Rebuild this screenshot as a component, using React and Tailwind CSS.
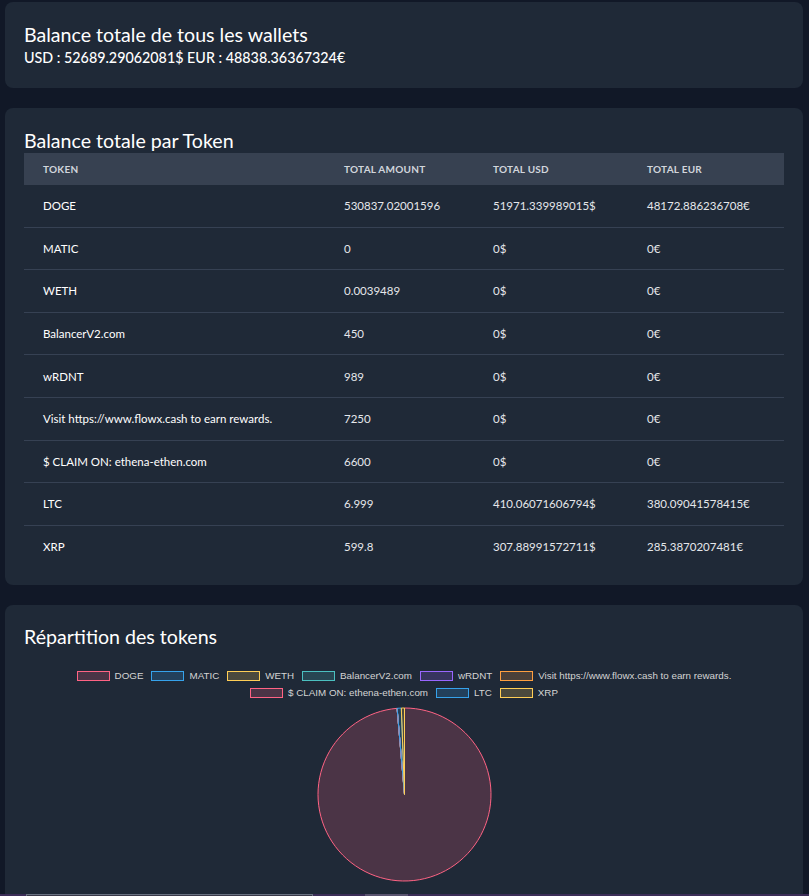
import React from 'react';

const tokens = [
  { name: 'DOGE', amount: '530837.02001596', usd: '51971.339989015$', eur: '48172.886236708€', value: 51971.339989015 },
  { name: 'MATIC', amount: '0', usd: '0$', eur: '0€', value: 0 },
  { name: 'WETH', amount: '0.0039489', usd: '0$', eur: '0€', value: 0 },
  { name: 'BalancerV2.com', amount: '450', usd: '0$', eur: '0€', value: 0 },
  { name: 'wRDNT', amount: '989', usd: '0$', eur: '0€', value: 0 },
  { name: 'Visit https://www.flowx.cash to earn rewards.', amount: '7250', usd: '0$', eur: '0€', value: 0 },
  { name: '$ CLAIM ON: ethena-ethen.com', amount: '6600', usd: '0$', eur: '0€', value: 0 },
  { name: 'LTC', amount: '6.999', usd: '410.06071606794$', eur: '380.09041578415€', value: 410.06071606794 },
  { name: 'XRP', amount: '599.8', usd: '307.88991572711$', eur: '285.3870207481€', value: 307.88991572711 },
];

// chart.js default palette
const palette = [
  { border: 'rgb(255,99,132)', fill: 'rgba(255,99,132,0.2)' },
  { border: 'rgb(54,162,235)', fill: 'rgba(54,162,235,0.2)' },
  { border: 'rgb(255,206,86)', fill: 'rgba(255,206,86,0.2)' },
  { border: 'rgb(75,192,192)', fill: 'rgba(75,192,192,0.2)' },
  { border: 'rgb(153,102,255)', fill: 'rgba(153,102,255,0.2)' },
  { border: 'rgb(255,159,64)', fill: 'rgba(255,159,64,0.2)' },
];

const colorOf = (i) => palette[i % palette.length];

const LegendItem = ({ label, index }) => {
  const c = colorOf(index);
  return (
    <div className="flex items-center">
      <span
        className="inline-block w-[33px] h-[10px] border mr-[5px]"
        style={{ borderColor: c.border, backgroundColor: c.fill }}
      />
      <span>{label}</span>
    </div>
  );
};

const PieChart = () => {
  const size = 175;
  const cx = size / 2;
  const cy = size / 2;
  const r = 86.5;
  const total = tokens.reduce((s, t) => s + t.value, 0);

  const point = (deg) => {
    const a = (deg * Math.PI) / 180;
    return [cx + r * Math.sin(a), cy - r * Math.cos(a)];
  };

  let start = 0;
  const slices = tokens.map((t, i) => {
    const sweep = (t.value / total) * 360;
    const end = start + sweep;
    const [x1, y1] = point(start);
    const [x2, y2] = point(end);
    const large = sweep > 180 ? 1 : 0;
    const d =
      sweep === 0
        ? `M ${cx} ${cy} L ${x1} ${y1}`
        : `M ${cx} ${cy} L ${x1} ${y1} A ${r} ${r} 0 ${large} 1 ${x2} ${y2} Z`;
    start = end;
    const c = colorOf(i);
    return <path key={t.name} d={d} fill={sweep === 0 ? 'none' : c.fill} stroke={c.border} strokeWidth="1" />;
  });

  return (
    <svg width={size} height={size} viewBox={`0 0 ${size} ${size}`}>
      {slices}
    </svg>
  );
};

const App = () => {
  return (
    <div className="min-h-screen bg-[#111827] px-[5px] pt-[2px] text-white font-['Lato',sans-serif] overflow-hidden">
      {/* Balance globale */}
      <div className="bg-[#1f2937] rounded-lg px-[19px] pt-[20px] pb-[20px] mr-[1px]">
        <h2 className="text-[19.6px] leading-[26px]">Balance totale de tous les wallets</h2>
        <p className="text-[14.3px] leading-[20px] font-medium">USD : 52689.29062081$ EUR : 48838.36367324€</p>
      </div>

      {/* Table par token */}
      <div className="bg-[#1f2937] rounded-lg px-[19px] pt-[20px] pb-[17px] mt-[20px] mr-[1px]">
        <h2 className="text-[19.6px] leading-[26px]">Balance totale par Token</h2>
        <div className="mt-[-1px] text-[11.5px]">
          <div className="grid grid-cols-[301px_149px_154px_1fr] h-[32px] items-center bg-[#374151] text-[10px] font-bold tracking-wide uppercase text-gray-300">
            <div className="pl-[19px]">Token</div>
            <div className="pl-[19px]">Total Amount</div>
            <div className="pl-[19px]">Total USD</div>
            <div className="pl-[19px]">Total EUR</div>
          </div>
          {tokens.map((t, i) => (
            <div
              key={t.name}
              className={`grid grid-cols-[301px_149px_154px_1fr] h-[42.6px] items-center ${i < tokens.length - 1 ? 'border-b border-gray-700' : ''}`}
            >
              <div className="pl-[19px] text-white">{t.name}</div>
              <div className="pl-[19px] text-gray-200">{t.amount}</div>
              <div className="pl-[19px] text-gray-200">{t.usd}</div>
              <div className="pl-[19px] text-gray-200">{t.eur}</div>
            </div>
          ))}
        </div>
      </div>

      {/* Répartition */}
      <div className="bg-[#1f2937] rounded-t-lg px-[19px] pt-[19px] mt-[20px] mr-[1px] h-[289px]">
        <h2 className="text-[19.6px] leading-[26px]">Répartition des tokens</h2>
        <div className="mt-[21px] flex flex-col items-center gap-[7px] text-[9.8px] leading-[10px] text-[#d4d4d4] font-['Liberation_Sans',sans-serif]">
          <div className="flex gap-[8px]">
            {tokens.slice(0, 6).map((t, i) => (
              <LegendItem key={t.name} label={t.name} index={i} />
            ))}
          </div>
          <div className="flex gap-[8px]">
            {tokens.slice(6).map((t, i) => (
              <LegendItem key={t.name} label={t.name} index={i + 6} />
            ))}
          </div>
        </div>
        <div className="flex justify-center mt-[9px]">
          <PieChart />
        </div>
      </div>

      {/* bas de page */}
      <div className="-mx-[5px] h-[10px] bg-[#3b2d57] flex items-start">
        <div className="ml-[26px] w-[287px] h-[10px] border border-gray-500 bg-[#3a3a4a]" />
        <div className="ml-[52px] w-[43px] h-[10px] bg-[#5a5470]" />
      </div>
    </div>
  );
};

export default App;
